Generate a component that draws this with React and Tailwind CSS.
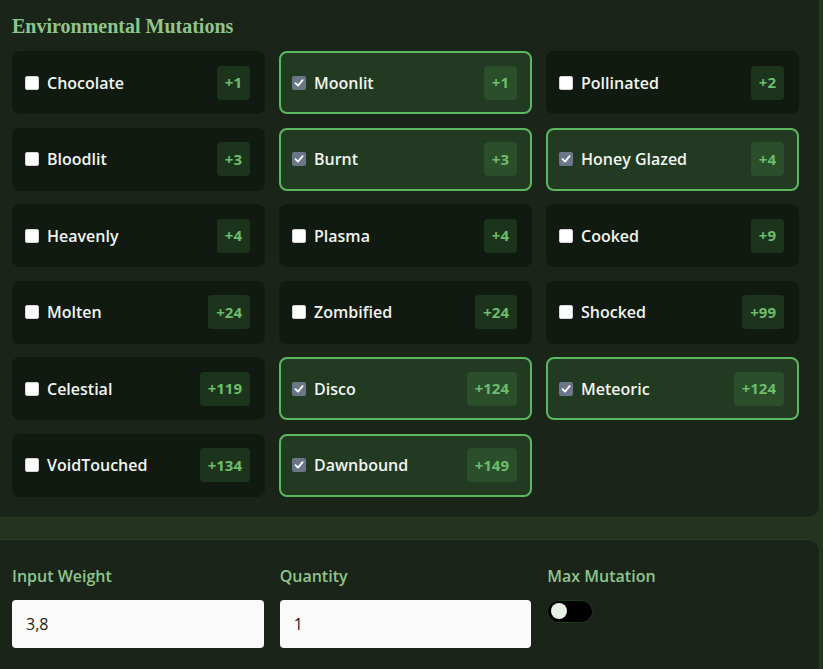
import { useState } from 'react';

const mutations = [
  { name: 'Chocolate', bonus: 1, on: false },
  { name: 'Moonlit', bonus: 1, on: true },
  { name: 'Pollinated', bonus: 2, on: false },
  { name: 'Bloodlit', bonus: 3, on: false },
  { name: 'Burnt', bonus: 3, on: true },
  { name: 'Honey Glazed', bonus: 4, on: true },
  { name: 'Heavenly', bonus: 4, on: false },
  { name: 'Plasma', bonus: 4, on: false },
  { name: 'Cooked', bonus: 9, on: false },
  { name: 'Molten', bonus: 24, on: false },
  { name: 'Zombified', bonus: 24, on: false },
  { name: 'Shocked', bonus: 99, on: false },
  { name: 'Celestial', bonus: 119, on: false },
  { name: 'Disco', bonus: 124, on: true },
  { name: 'Meteoric', bonus: 124, on: true },
  { name: 'VoidTouched', bonus: 134, on: false },
  { name: 'Dawnbound', bonus: 149, on: true },
];

const Check = ({ checked }) =>
  checked ? (
    <span className="w-[14px] h-[14px] rounded-[2px] bg-[#6b7689] flex items-center justify-center shrink-0">
      <svg width="10" height="10" viewBox="0 0 10 10" fill="none">
        <path d="M1.5 5.2 L4 7.6 L8.6 2.2" stroke="#fff" strokeWidth="1.8" strokeLinecap="round" strokeLinejoin="round" />
      </svg>
    </span>
  ) : (
    <span className="w-[14px] h-[14px] rounded-[2px] bg-white border border-[#d4d4d4] shrink-0" />
  );

const MutationCard = ({ item, onToggle }) => (
  <button
    type="button"
    onClick={onToggle}
    className={
      'h-[63px] rounded-lg flex items-center pl-[11px] pr-[13px] text-left ' +
      (item.on ? 'bg-[#223a22] border-2 border-[#5cb85f]' : 'bg-[#111a10] border-2 border-transparent')
    }
  >
    <Check checked={item.on} />
    <span className="ml-[8px] text-[16px] font-semibold text-[#f1f5f0] flex-1">{item.name}</span>
    <span
      className={
        'h-[34px] px-[8px] rounded flex items-center text-[15px] font-bold text-[#6dbd6d] ' +
        (item.on ? 'bg-[#2b4e2b]' : 'bg-[#1d341c]')
      }
    >
      +{item.bonus}
    </span>
  </button>
);

export default function App() {
  const [items, setItems] = useState(mutations);
  const [weight, setWeight] = useState('3,8');
  const [qty, setQty] = useState('1');
  const [maxMut, setMaxMut] = useState(false);

  const toggle = (i) => setItems(items.map((m, j) => (j === i ? { ...m, on: !m.on } : m)));

  return (
    <div className="min-h-screen bg-[#233320] font-['Open_Sans',sans-serif] overflow-hidden">
      <section className="w-[820px] bg-[#1a2418] border-r border-b border-[#2a3b27] rounded-br-xl pl-3 pr-5 pt-3 pb-5">
        <h2 className="font-['Liberation_Serif',serif] font-bold text-[20px] leading-7 text-[#8fc48d] mb-[11px]">
          Environmental Mutations
        </h2>
        <div className="grid grid-cols-3 gap-x-[14px] gap-y-[13.5px]">
          {items.map((m, i) => (
            <MutationCard key={m.name} item={m} onToggle={() => toggle(i)} />
          ))}
        </div>
      </section>

      <section className="mt-[21px] w-[820px] h-[160px] bg-[#1a2418] border-r border-t border-[#2a3b27] rounded-tr-xl pl-3 pr-5 pt-6">
        <div className="grid grid-cols-3 gap-x-4">
          <label className="flex flex-col">
            <span className="text-[16px] font-semibold text-[#8fc48d] leading-6 mb-3">Input Weight</span>
            <input
              value={weight}
              onChange={(e) => setWeight(e.target.value)}
              className="h-12 px-[14px] bg-[#fafafa] rounded-sm text-[16px] text-[#1a1a1a] outline-none"
            />
          </label>
          <label className="flex flex-col">
            <span className="text-[16px] font-semibold text-[#8fc48d] leading-6 mb-3">Quantity</span>
            <input
              value={qty}
              onChange={(e) => setQty(e.target.value)}
              className="h-12 px-[14px] bg-[#fafafa] rounded-sm text-[16px] text-[#1a1a1a] outline-none"
            />
          </label>
          <div className="flex flex-col">
            <span className="text-[16px] font-semibold text-[#8fc48d] leading-6 mb-3">Max Mutation</span>
            <button
              type="button"
              onClick={() => setMaxMut(!maxMut)}
              className={
                'w-[46px] h-[23px] rounded-full border border-[#1f3a1d] bg-black flex items-center px-[3px] ' +
                (maxMut ? 'justify-end' : 'justify-start')
              }
            >
              <span className="w-4 h-4 rounded-full bg-[#e6f3e4]" />
            </button>
          </div>
        </div>
      </section>
    </div>
  );
}
